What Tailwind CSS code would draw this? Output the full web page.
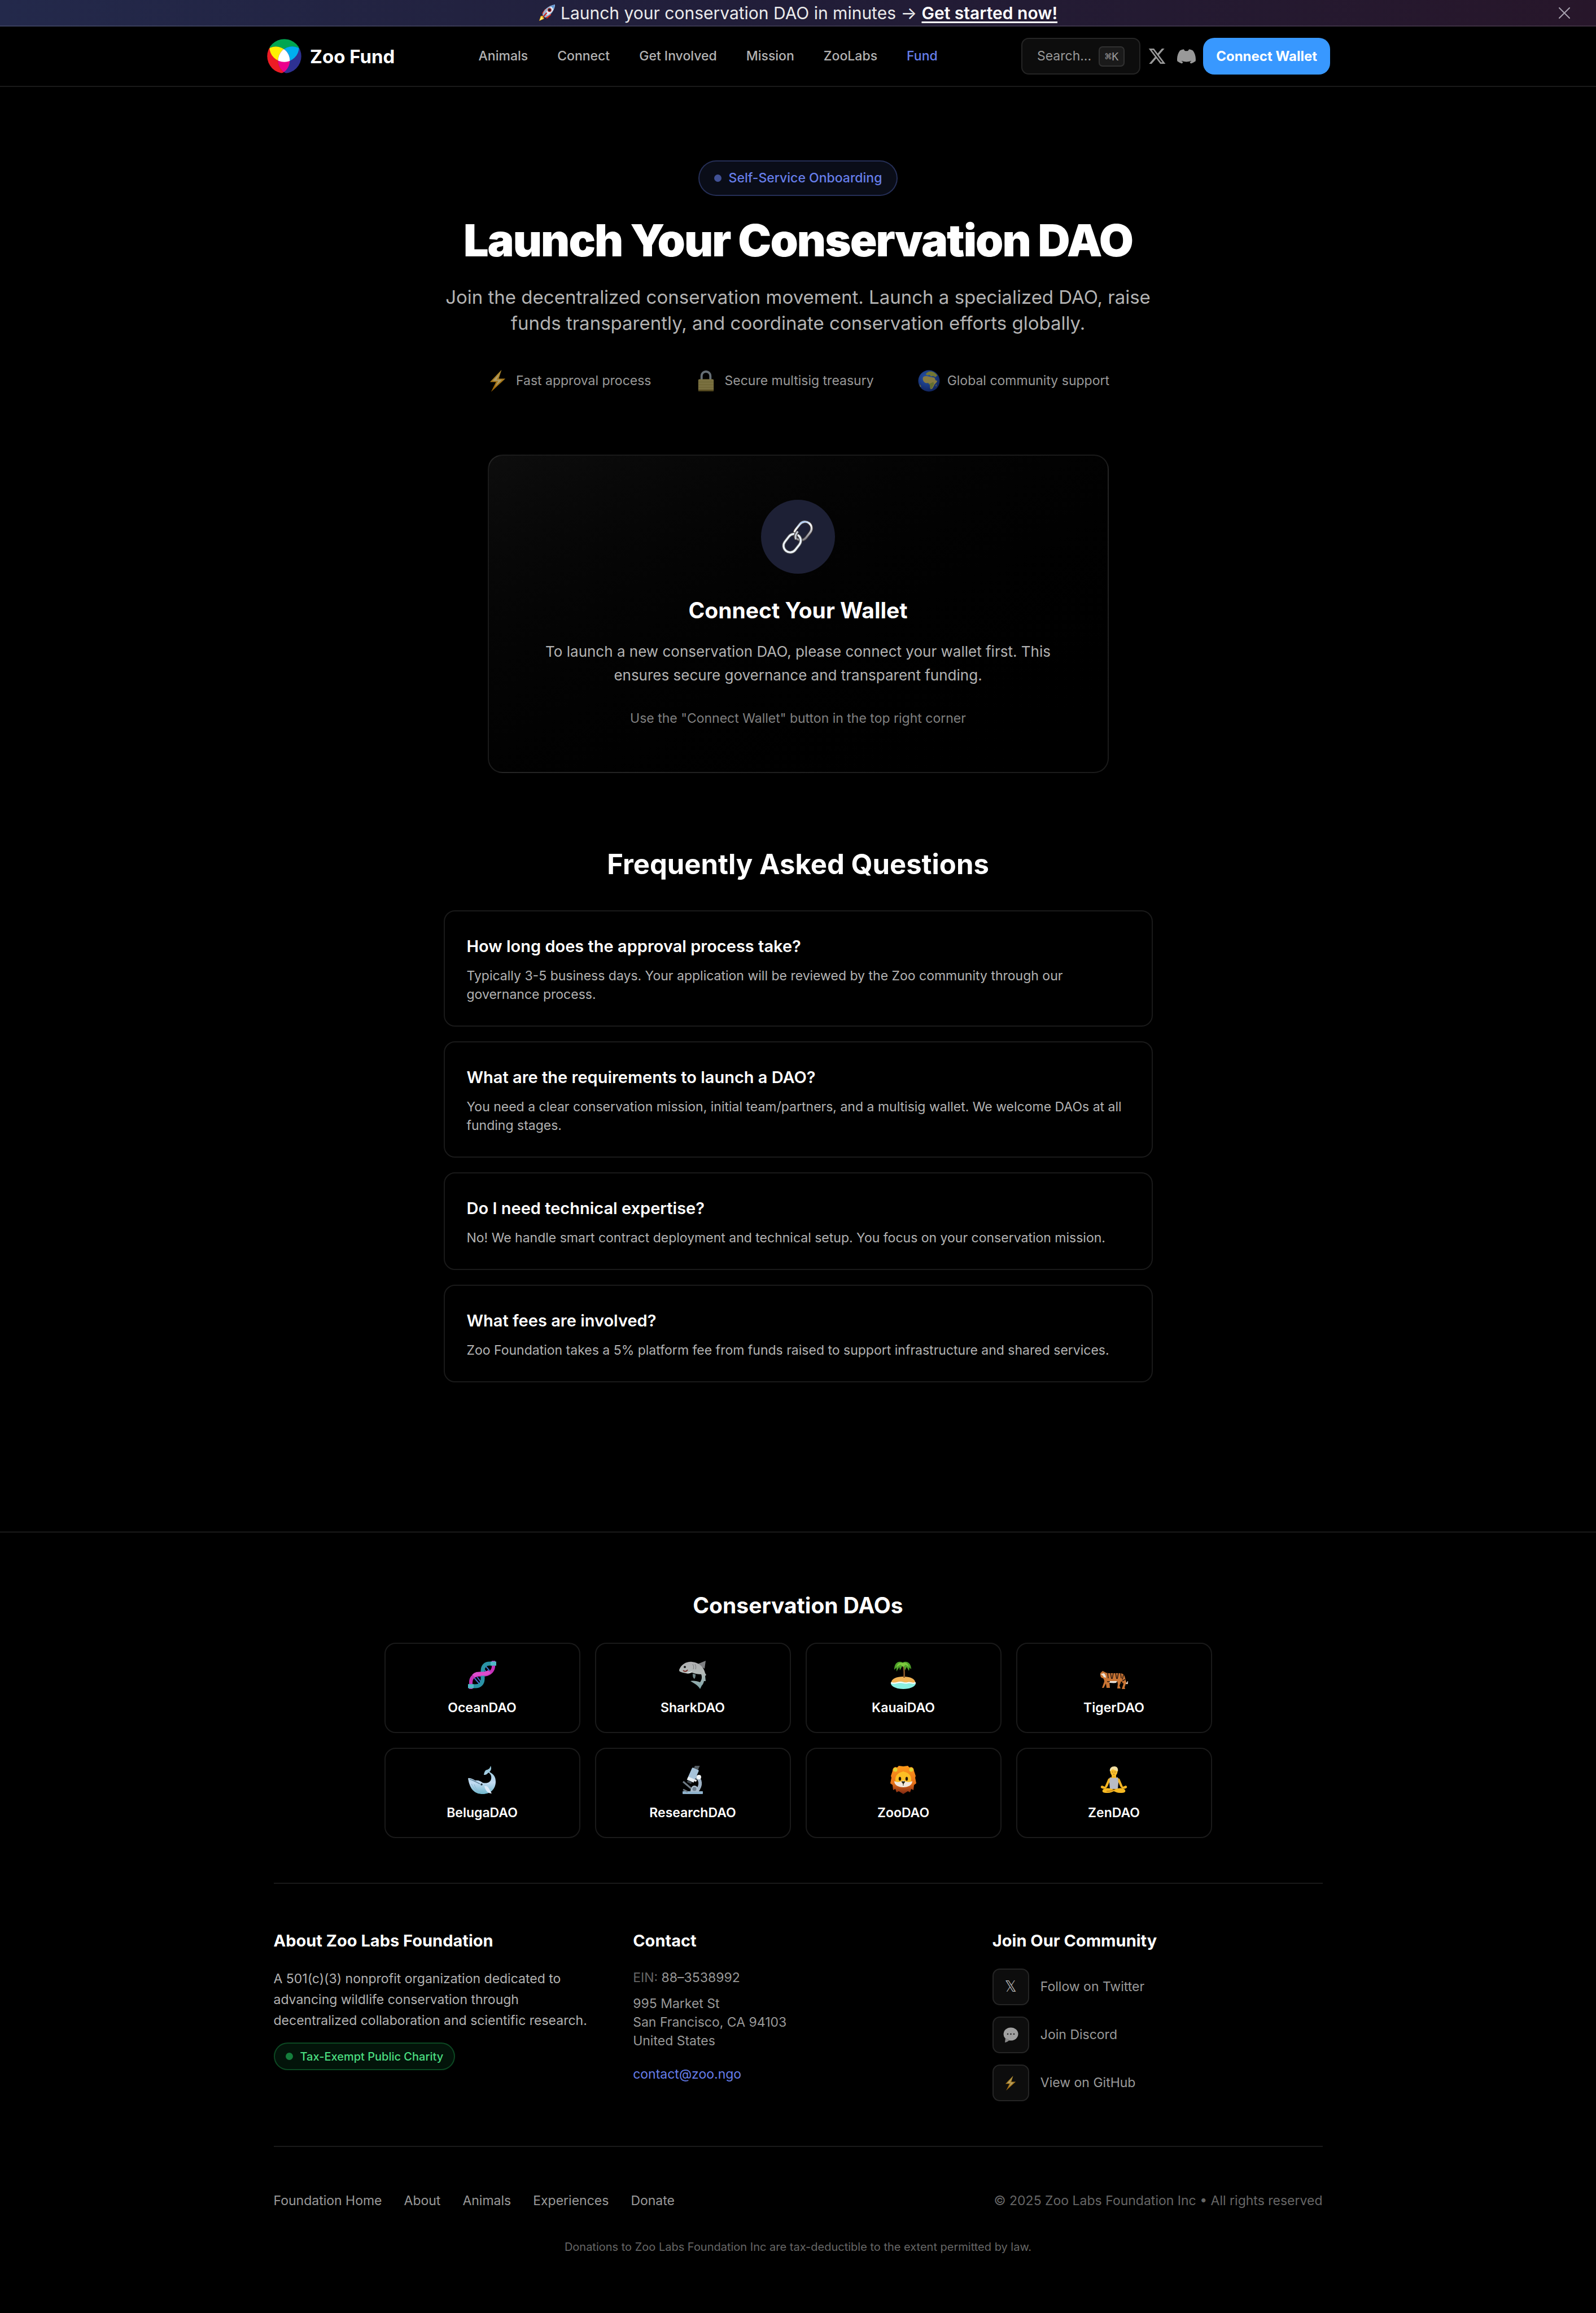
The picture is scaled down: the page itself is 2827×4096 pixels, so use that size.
<!DOCTYPE html>
<html lang="en">
<head>
<meta charset="utf-8">
<meta name="viewport" content="width=device-width, initial-scale=1">
<title>Zoo Fund – Launch Your Conservation DAO</title>
<script src="https://cdn.jsdelivr.net/npm/@tailwindcss/browser@4"></script>
</head>
<body class="bg-black text-white font-['Inter',sans-serif] text-[23px] leading-[33px]">

<svg class="absolute size-0" aria-hidden="true">
  <defs>
    <linearGradient id="gold" x1="0" y1="0" x2="0" y2="1"><stop offset="0" stop-color="#f9c846"/><stop offset="1" stop-color="#e08a00"/></linearGradient>
    <linearGradient id="steel" x1="0" y1="0" x2="1" y2="1"><stop offset="0" stop-color="#8fb6ea"/><stop offset=".35" stop-color="#fff"/><stop offset="1" stop-color="#6a6a72"/></linearGradient>
    <linearGradient id="whale" x1="0" y1="0" x2="0" y2="1"><stop offset="0" stop-color="#8ec3d6"/><stop offset=".6" stop-color="#c3dcf3"/><stop offset="1" stop-color="#6fb6cc"/></linearGradient>
    <linearGradient id="shark" x1="0" y1="0" x2="0" y2="1"><stop offset="0" stop-color="#b0b0b2"/><stop offset=".4" stop-color="#b4bab8"/><stop offset="1" stop-color="#7ba3a6"/></linearGradient>
    <linearGradient id="mane" x1="0" y1="0" x2="0" y2="1"><stop offset="0" stop-color="#ff9a1a"/><stop offset=".6" stop-color="#e8731a"/><stop offset="1" stop-color="#7d2613"/></linearGradient>
    <radialGradient id="sea" cx=".4" cy=".35" r=".7"><stop offset="0" stop-color="#2f6bd8"/><stop offset="1" stop-color="#142a70"/></radialGradient>
    <symbol id="bolt" viewBox="0 0 40 40"><path d="M27 0 6 22h11L8 40l26-24H22z" fill="url(#gold)"/><path d="M24 6 11 20h10l-6 11 13-13H18z" fill="#fff1b8" opacity=".75"/></symbol>
  </defs>
</svg>

<div class="flex items-center justify-between h-[47px] px-[46px] border-b-2 border-white/10 bg-linear-to-r from-[#23294b] via-[#211d38] to-[#27162a]">
  <span class="w-5"></span>
  <p class="flex items-center gap-2 text-[30px] leading-[44px] text-[#ebebeb]">
    <svg class="size-[31px]" viewBox="0 0 32 32" role="img" aria-label="Rocket">
      <path d="M6 17 12 9l3 2-5 9zM15 27l8-7-2-4-8 7z" fill="#d4261c"/>
      <path d="M4 22 1 31l9-4-2-5z" fill="#ffb41f"/><path d="M5 23 2 30l6-3z" fill="#fff17a"/>
      <path d="M7 20C9 11 17 3 30 1 29 13 22 21 12 25z" fill="#9fb4cf"/>
      <path d="M12 19C15 11 21 5 30 1c-1 8-5 14-13 19z" fill="#e3ebf5"/>
      <path d="M22 4l8-3-3 9c-1-3-3-5-5-6z" fill="#5d96d6"/>
      <circle cx="20" cy="11" r="3.6" fill="#c52626"/><circle cx="20" cy="11" r="2.4" fill="#16202e"/>
      <path d="M9 23l6-7" stroke="#c52626" stroke-width="2.4"/>
    </svg>
    <span>Launch your conservation DAO in minutes → <a href="#" class="font-semibold text-white underline decoration-3 underline-offset-4">Get started now!</a></span>
  </p>
  <button type="button" aria-label="Dismiss" class="text-[#a8a3b0]">
    <svg class="size-5" viewBox="0 0 20 20" fill="none" stroke="currentColor" stroke-width="2" stroke-linecap="round"><path d="M1 1l18 18M19 1 1 19"/></svg>
  </button>
</div>

<header class="h-[107px] border-b-2 border-white/10">
  <div class="mx-auto max-w-[1885px] h-full flex items-center justify-between">
    <a href="#" class="flex items-center gap-[15px] pl-[2px]">
      <svg class="size-[61px]" viewBox="25 72 225 226" role="img" aria-label="Zoo logo">
        <defs>
          <clipPath id="cAll"><circle cx="137.500" cy="185" r="112"/></clipPath>
          <clipPath id="cG"><circle cx="137.500" cy="126.400" r="96.600"/></clipPath>
          <clipPath id="cR"><circle cx="82" cy="214" r="92"/></clipPath>
        </defs>
        <g clip-path="url(#cAll)">
          <circle cx="137.500" cy="126.400" r="96.600" fill="#00a651"/>
          <circle cx="82" cy="214" r="92" fill="#ed1c24"/>
          <circle cx="190" cy="214" r="93" fill="#2e3192"/>
          <g clip-path="url(#cG)"><circle cx="82" cy="214" r="92" fill="#fff200"/><circle cx="190" cy="214" r="93" fill="#00aeef"/></g>
          <g clip-path="url(#cR)"><circle cx="190" cy="214" r="93" fill="#ec008c"/><g clip-path="url(#cG)"><circle cx="190" cy="214" r="93" fill="#fff"/></g></g>
        </g>
      </svg>
      <span class="text-[33px] leading-[46px] font-bold">Zoo Fund</span>
    </a>
    <nav class="flex items-center gap-[52px] font-medium text-[#b3b3b3]">
      <a href="#">Animals</a><a href="#">Connect</a><a href="#">Get Involved</a><a href="#">Mission</a><a href="#">ZooLabs</a><a href="#" class="text-[#667eea]">Fund</a>
    </nav>
    <div class="flex items-center gap-[13px]">
      <button type="button" class="flex items-center gap-[13px] h-[65px] px-[26px] rounded-[13px] border-2 border-white/10 bg-[#0d0d0d] text-[#999999]">
        <span>Search...</span>
        <kbd class="flex items-center h-[36px] px-[9px] rounded-[7px] border-2 border-white/10 bg-[#1a1a1a] text-[20px] leading-[26px] font-['DejaVu_Sans_Mono',monospace]">⌘K</kbd>
      </button>
      <div class="flex items-center gap-[19px] text-[#999999]">
        <a href="#" aria-label="X"><svg class="size-[33px]" viewBox="0 0 24 24" fill="currentColor"><path d="M18.244 2.250h3.308l-7.227 8.260 8.502 11.240H16.170l-5.214-6.817L4.990 21.750H1.680l7.730-8.835L1.254 2.250H8.080l4.713 6.231zm-1.161 17.520h1.833L7.084 4.126H5.117z"/></svg></a>
        <a href="#" aria-label="Discord"><svg class="w-[33px] h-[26px]" viewBox="0 0 40 31" fill="currentColor"><path d="M33.866 2.687A33 33 0 0 0 25.668.132a.2.200 0 0 0-.214.100c-1.100 2-2.300 3.400-3.200 3.400h-4.600c-.900 0-2-1.400-3.100-3.400a.200.200 0 0 0-.214-.100A33 33 0 0 0 6.110 2.690C1.600 8.700-.900 16.800.300 25.500c3.100 2.300 6.300 4 10.300 5.200.9-1.100 1.500-2.200 2.100-3.500-1.200-.5-2.200-1-3.200-1.700l.8-.6c6 2.800 13.500 2.800 19.400 0l.8.600c-1 .700-2 1.200-3.200 1.700.6 1.300 1.200 2.400 2.100 3.500 4-1.200 7.200-2.900 10.300-5.200 1.100-8.900-1.300-16.800-5.834-22.813z"/></svg></a>
      </div>
      <button type="button" class="h-[65px] px-[23px] rounded-[20px] bg-[#3898ff] text-[24px] leading-[33px] font-bold">Connect Wallet</button>
    </div>
  </div>
</header>

<main class="flex flex-col items-center pt-[130px] pb-[264px]">
  <span class="flex items-center gap-[13px] h-[63px] px-[26px] rounded-full border-2 border-[#667eea]/30 bg-[#667eea]/10 font-medium text-[#667eea]"><span class="size-[13px] rounded-full bg-[#667eea]/60"></span>Self-Service Onboarding</span>
  <h1 class="mt-[39px] text-[79px] leading-[79px] font-black tracking-tight">Launch Your Conservation DAO</h1>
  <p class="mt-[38px] max-w-[1256px] text-center text-[33px] leading-[46px] text-[#b3b3b3]">Join the decentralized conservation movement. Launch a specialized DAO, raise funds transparently, and coordinate conservation efforts globally.</p>

  <ul class="mt-[60px] flex items-center gap-[78px] text-[#999999]">
    <li class="flex items-center gap-[13px]"><svg class="size-[39px] opacity-70"><use href="#bolt"/></svg>Fast approval process</li>
    <li class="flex items-center gap-[13px]">
      <svg class="size-[39px] opacity-60" viewBox="0 0 40 40"><path d="M12 19v-8a8 8 0 0 1 16 0v8" fill="none" stroke="#a9b7c4" stroke-width="4"/><rect x="6" y="17" width="28" height="22" rx="2" fill="#cbbb6c"/><path d="M6 22h28M6 27h28M6 32h28" stroke="#b3a353" stroke-width="1"/><rect x="6" y="36" width="28" height="3" rx="1" fill="#8c7a35"/></svg>Secure multisig treasury</li>
    <li class="flex items-center gap-[13px]">
      <svg class="size-[39px] opacity-80" viewBox="0 0 40 40"><circle cx="20" cy="20" r="19.500" fill="url(#sea)"/><path d="M9 14c2-3 6-3 10-2l5 1 6 1 2 5 3 1c-1 4-5 5-6 9l-3 5-3 1c-2-3 0-6-2-9-1-3-3-2-6-2-4-1-7-5-6-10z" fill="#a89a52"/><path d="M14 8c2-4 7-6 11-5 5 1 8 4 10 7l-3 3-5-2-3 1-3-3-4 1z" fill="#8f9440"/><path d="M17 23l4 2 7-3 1 4-3 6-3 3c-1-3 0-6-2-8z" fill="#7c8a3c"/><path d="M32 28l2-2-1 5zM3 26l3 4-2 1z" fill="#97934a"/></svg>Global community support</li>
  </ul>

  <section class="mt-[111px] w-full max-w-[1100px] flex flex-col items-center rounded-[26px] border-2 border-white/10 bg-linear-to-br from-[#0d0d0d] to-black px-[78px] py-[78px] text-center">
    <div class="flex items-center justify-center size-[131px] rounded-full bg-[#1d2035]">
      <svg class="size-[60px]" viewBox="0 0 72 72" fill="none" role="img" aria-label="Link">
        <rect x="32" y="2" width="28" height="42" rx="14" transform="rotate(38 46 23)" stroke="#3b3436" stroke-width="7"/>
        <rect x="32" y="2" width="28" height="42" rx="14" transform="rotate(38 46 23)" stroke="url(#steel)" stroke-width="4"/>
        <rect x="9" y="28" width="28" height="42" rx="14" transform="rotate(38 23 49)" stroke="#4a4a4c" stroke-width="7"/>
        <rect x="9" y="28" width="28" height="42" rx="14" transform="rotate(38 23 49)" stroke="#edf3fb" stroke-width="4"/>
        <path d="M31 41c-2-5-1-11 4-17" stroke="#3b3436" stroke-width="7"/><path d="M31 41c-2-5-1-11 4-17" stroke="#c4cad3" stroke-width="4"/>
      </svg>
    </div>
    <h2 class="mt-[39px] text-[39px] leading-[52px] font-bold">Connect Your Wallet</h2>
    <p class="mt-[26px] text-[26px] leading-[42px] text-[#b3b3b3]">To launch a new conservation DAO, please connect your wallet first. This ensures secure governance and transparent funding.</p>
    <p class="mt-[39px] text-[#808080]">Use the "Connect Wallet" button in the top right corner</p>
  </section>

  <section class="mt-[132px] w-full max-w-[1256px]">
    <h2 class="text-center text-[49px] leading-[59px] font-bold">Frequently Asked Questions</h2>
    <div class="mt-[52px] flex flex-col gap-[26px]">
      <article class="rounded-[20px] border-2 border-[#1a1a1a] px-[39px] pt-[39px] pb-[38px]">
        <h3 class="text-[29px] leading-[46px] font-semibold">How long does the approval process take?</h3>
        <p class="mt-[13px] text-[#b3b3b3]">Typically 3-5 business days. Your application will be reviewed by the Zoo community through our governance process.</p>
      </article>
      <article class="rounded-[20px] border-2 border-[#1a1a1a] px-[39px] pt-[39px] pb-[38px]">
        <h3 class="text-[29px] leading-[46px] font-semibold">What are the requirements to launch a DAO?</h3>
        <p class="mt-[13px] text-[#b3b3b3]">You need a clear conservation mission, initial team/partners, and a multisig wallet. We welcome DAOs at all funding stages.</p>
      </article>
      <article class="rounded-[20px] border-2 border-[#1a1a1a] px-[39px] pt-[39px] pb-[38px]">
        <h3 class="text-[29px] leading-[46px] font-semibold">Do I need technical expertise?</h3>
        <p class="mt-[13px] text-[#b3b3b3]">No! We handle smart contract deployment and technical setup. You focus on your conservation mission.</p>
      </article>
      <article class="rounded-[20px] border-2 border-[#1a1a1a] px-[39px] pt-[39px] pb-[38px]">
        <h3 class="text-[29px] leading-[46px] font-semibold">What fees are involved?</h3>
        <p class="mt-[13px] text-[#b3b3b3]">Zoo Foundation takes a 5% platform fee from funds raised to support infrastructure and shared services.</p>
      </article>
    </div>
  </section>
</main>

<footer class="border-t-2 border-[#1a1a1a] pt-[103px] pb-[104px]">
  <h2 class="text-center text-[39px] leading-[52px] font-bold">Conservation DAOs</h2>
  <div class="mx-auto mt-[40px] max-w-[1466px] grid grid-cols-4 gap-[26px] text-center font-semibold">
    <a href="#" class="flex flex-col items-center gap-[13px] rounded-[20px] border-2 border-[#1a1a1a] py-[26px]">
      <span class="flex items-center h-[58px]"><svg class="size-[50px]" viewBox="0 0 50 50" fill="none">
        <path d="M27 13l8 10M31 9l9 11M10 29l12 14M15 27l8 11" stroke="#3f6fd0" stroke-width="2"/>
        <path d="M5 50V38c0-8 5-12 12-13h10c10 0 17-6 18-14V0" stroke="#c431b8" stroke-width="6"/>
        <path d="M0 45h13c8 0 13-5 13-13V18C26 9 31 5 38 5h12" stroke="#2a93a6" stroke-width="7"/>
        <path d="M10 27c4-5 9-4 16-4 5 0 9-1 12-4" stroke="#dd4ccc" stroke-width="7"/>
        <path d="M0 45h10M40 5h10" stroke="#4fb9c6" stroke-width="7"/></svg></span>
      <span>OceanDAO</span></a>
    <a href="#" class="flex flex-col items-center gap-[13px] rounded-[20px] border-2 border-[#1a1a1a] py-[26px]">
      <span class="flex items-center h-[58px]"><svg class="size-[50px]" viewBox="0 0 50 50">
        <path d="M33 6 48 0l-2 14z" fill="#7f8083"/>
        <path d="M1 16C5 6 14 1 24 2c13 1 21 10 23 20l2 3-2 2 1 9h-3c-1 4-2 6-4 8l-3 6c-2-4-6-8-17-14 6-1 12 0 17 2 3-4 4-9 2-14-6 0-11-1-16-3-8 2-16 1-22-2-1-1-1-2-1-3z" fill="url(#shark)"/>
        <path d="M25 23c0 4 0 7 3 9 2-2 2-6 2-8z" fill="#6f8587"/><path d="M4 19c6 3 14 3 20-1-3 5-6 5-11 4z" fill="#dfe7e6"/>
        <path d="M8 17c3 3 6 2 8-1" stroke="#7a2f2a" stroke-width="2" fill="none"/><circle cx="11" cy="11" r="2" fill="#161616"/><path d="M25 6c2 3 2 6 1 9M29 6c2 3 2 6 1 9" stroke="#77797b" fill="none"/></svg></span>
      <span>SharkDAO</span></a>
    <a href="#" class="flex flex-col items-center gap-[13px] rounded-[20px] border-2 border-[#1a1a1a] py-[26px]">
      <span class="flex items-center h-[58px]"><svg class="size-[50px]" viewBox="0 0 50 50">
        <ellipse cx="25" cy="40" rx="22" ry="10" fill="#8af0e2"/><path d="M4 38c0-6 9-10 21-10s21 4 21 10c-5 3-8-2-13 0-6 2-9-2-14-1-6 1-9 3-15 1z" fill="#f2b457"/><path d="M3 39c6 2 10 0 16-1 5 0 8 3 14 1 5-1 8 2 14 0" stroke="#fff" stroke-width="2" fill="none"/>
        <path d="M25 30c1-8 0-15-1-22h3c1 8 1 14 1 22z" fill="#8a5a2b"/>
        <path d="M24 3C15-1 9 5 9 16l4-4v7l5-8 1 6 6-11 3 11 3-6 4 7 1-6 3 3C39 6 33-1 24 3z" fill="#4fa32a"/><path d="M24 4c-6-2-9 1-11 7l7-4 5 4 4-4 6 4c-2-6-5-9-11-7z" fill="#7ecb3e"/></svg></span>
      <span>KauaiDAO</span></a>
    <a href="#" class="flex flex-col items-center gap-[13px] rounded-[20px] border-2 border-[#1a1a1a] py-[26px]">
      <span class="flex items-center h-[58px]"><svg class="size-[50px]" viewBox="0 0 50 50">
        <path d="M1 22l4-4 4 2c3 2 6 2 10 2h16c6 0 9 3 10 9l2 7 3 1c0 3-2 3-4 2l-2 6 1 3h-6l3-9-4-5-3 8 2 5h-6l1-8-1-5H17l1 12h-6l-1-8-4 8H4l4-11c0-3-1-5-2-6-4 0-5-4-5-7z" fill="#c97433"/>
        <path d="M1 24c2 0 4 1 6 5l4 1c0-4-2-7-4-8zM17 36h14l-2 3c-4 1-8 0-12 0z" fill="#ece4da"/>
        <path d="M14 22l1 9M19 22l2 10M24 22l-2 10M28 22l2 10M33 22l-2 10M37 22l1 9M42 25l-2 8M13 37h5M37 40h5M45 33l-5 3" stroke="#2b1a12" stroke-width="1.500"/><path d="M47 39c1 2 3 1 3-3" stroke="#ddd" stroke-width="2" fill="none"/></svg></span>
      <span>TigerDAO</span></a>
    <a href="#" class="flex flex-col items-center gap-[13px] rounded-[20px] border-2 border-[#1a1a1a] py-[26px]">
      <span class="flex items-center h-[58px]"><svg class="size-[50px]" viewBox="0 0 50 50">
        <path d="M40 0c2 4 1 8-2 11 8 4 11 9 11 17 0 13-9 22-23 22C12 50 3 42 0 22c5-1 9 2 13 4 5-1 9 1 13 4 8 2 14-1 15-7 1-5-1-9-5-11-3 4-5 4-8 4 1-6 3-9 6-9 3-1 5-3 6-7z" fill="url(#whale)"/>
        <path d="M29 36c3-1 6 0 8 4l5 9c-6 0-11-4-13-13z" fill="#dbe9f8"/><path d="M3 24c6 1 12 5 18 8" stroke="#5f8299" stroke-width="1.500" fill="none"/><path d="M6 32c3 6 6 10 10 13M11 33c2 6 5 10 9 13" stroke="#8fb4cf" fill="none"/><circle cx="24" cy="33" r="1.800" fill="#20303a"/></svg></span>
      <span>BelugaDAO</span></a>
    <a href="#" class="flex flex-col items-center gap-[13px] rounded-[20px] border-2 border-[#1a1a1a] py-[26px]">
      <span class="flex items-center h-[58px]"><svg class="size-[50px]" viewBox="0 0 50 50">
        <path d="M30 19c10 4 11 16 2 26" stroke="#9fb3c6" stroke-width="6" fill="none"/><rect x="7" y="45" width="36" height="5" rx="1" fill="#8fb3cd"/><path d="M21 46c0-7 3-11 7-11s8 4 8 11z" fill="#a9bccd"/><circle cx="28" cy="41" r="3.500" fill="#6e7f8f"/>
        <path d="M8 28l14 12M8 42l8 4" stroke="#6f7c86" stroke-width="3"/>
        <g transform="rotate(24 25 16)"><rect x="19" y="4" width="13" height="20" rx="2" fill="#a7c3da"/><rect x="19" y="22" width="13" height="6" fill="#e6edf3"/><rect x="21" y="28" width="8" height="4" fill="#3c454c"/><rect x="22" y="-4" width="8" height="8" fill="#555d63"/></g>
        <circle cx="36" cy="20" r="4" fill="#f3f6f8"/><circle cx="30" cy="26" r="2" fill="#fff"/></svg></span>
      <span>ResearchDAO</span></a>
    <a href="#" class="flex flex-col items-center gap-[13px] rounded-[20px] border-2 border-[#1a1a1a] py-[26px]">
      <span class="flex items-center h-[58px]"><svg class="size-[50px]" viewBox="0 0 50 50">
        <path d="M25 1 33 0l3 3c4-2 8 1 8 6l3 9-1 3 2 10-4 3-1 9-4-2-2 6-4-2-8 5-8-5-4 2-2-6-4 2-1-9-4-3 2-10-1-3 3-9c0-5 4-8 8-6l3-3z" fill="url(#mane)"/>
        <circle cx="11" cy="7" r="3.500" fill="#e0d234"/><circle cx="39" cy="7" r="3.500" fill="#e0d234"/>
        <path d="M25 10c9 2 15 7 14 16 0 6-6 11-14 11S11 32 11 26c-1-9 5-14 14-16z" fill="#fdbe24"/>
        <path d="M9 27c5 3 11 2 16-1 5 3 11 4 16 1 0 7-7 11-16 11S9 34 9 27z" fill="#f1e8dc"/>
        <ellipse cx="19" cy="23" rx="2.200" ry="3.500" fill="#241409"/><ellipse cx="31" cy="23" rx="2.200" ry="3.500" fill="#241409"/><path d="M22 28h6l-3 4zM25 32v3" fill="#221" stroke="#221"/></svg></span>
      <span>ZooDAO</span></a>
    <a href="#" class="flex flex-col items-center gap-[13px] rounded-[20px] border-2 border-[#1a1a1a] py-[26px]">
      <span class="flex items-center h-[58px]"><svg class="size-[50px]" viewBox="0 0 50 50">
        <path d="M21 15h8v5l6 3 6 14 5-2c3 1 3 4 0 5-4 2-8 0-10-4l-3-7H17l-3 7c-2 4-6 6-10 4-3-1-3-4 0-5l5 2 6-14 6-3z" fill="#f3b421"/>
        <path d="M18 20c2 2 12 2 14 0l1 10-1 11H18l-1-11z" fill="#b9bcc4"/>
        <path d="M5 43c3-4 9-5 20-1 11-4 17-3 20 1 2 5-5 5-9 5-5 0-8-2-11-3-3 1-6 3-11 3-4 0-11 0-9-5z" fill="#f6b922"/><path d="M12 45c7 0 11-1 15-3" stroke="#c98512" stroke-width="1.500" fill="none"/>
        <ellipse cx="25" cy="10" rx="6.500" ry="8" fill="#fbc02d"/><path d="M18 10c-1-6 3-9 8-9s7 4 6 9c-3-1-6-3-9-4z" fill="#f2dfa0"/><path d="M22 11h2M26 11h2M24 15h2" stroke="#8a5a10"/></svg></span>
      <span>ZenDAO</span></a>
  </div>

  <div class="mx-auto mt-[79px] max-w-[1858px]">
    <div class="grid grid-cols-3 gap-[52px] border-t-2 border-[#1a1a1a] pt-[78px] pb-[79px]">
      <section>
        <h3 class="text-[29px] leading-[46px] font-bold">About Zoo Labs Foundation</h3>
        <p class="mt-[26px] leading-[37px] text-[#b3b3b3]">A 501(c)(3) nonprofit organization dedicated to advancing wildlife conservation through decentralized collaboration and scientific research.</p>
        <span class="mt-[20px] inline-flex items-center gap-[13px] h-[49px] px-[19px] rounded-full border-2 border-[#22c55e]/30 bg-[#22c55e]/10 text-[20px] leading-[26px] font-medium text-[#4ade80]"><span class="size-[13px] rounded-full bg-[#22c55e]/60"></span>Tax-Exempt Public Charity</span>
      </section>
      <section class="text-[#999999]">
        <h3 class="text-[29px] leading-[46px] font-bold text-white">Contact</h3>
        <p class="mt-[26px]"><span class="text-[#666666]">EIN:</span> 88–3538992</p>
        <address class="mt-[13px] not-italic">995 Market St<br>San Francisco, CA 94103<br>United States</address>
        <p class="mt-[26px]"><a href="#" class="text-[#667eea]">contact@zoo.ngo</a></p>
      </section>
      <section>
        <h3 class="text-[29px] leading-[46px] font-bold">Join Our Community</h3>
        <ul class="mt-[26px] flex flex-col gap-[20px] text-[#999999]">
          <li><a href="#" class="flex items-center gap-[20px]"><span class="flex items-center justify-center size-[65px] rounded-[13px] border-2 border-white/10 bg-[#0d0d0d] font-['DejaVu_Sans',sans-serif] text-[26px] text-[#b3b3b3]">𝕏</span>Follow on Twitter</a></li>
          <li><a href="#" class="flex items-center gap-[20px]"><span class="flex items-center justify-center size-[65px] rounded-[13px] border-2 border-white/10 bg-[#0d0d0d]"><svg class="size-[27px]" viewBox="0 0 27 27"><ellipse cx="13.500" cy="12" rx="13" ry="11.500" fill="#a0a0a0"/><path d="M4 19l-1 8c4-1 6-2 8-5z" fill="#8a8a8a"/><circle cx="8" cy="12" r="1.300" fill="#222"/><circle cx="13.500" cy="12" r="1.300" fill="#222"/><circle cx="19" cy="12" r="1.300" fill="#222"/></svg></span>Join Discord</a></li>
          <li><a href="#" class="flex items-center gap-[20px]"><span class="flex items-center justify-center size-[65px] rounded-[13px] border-2 border-white/10 bg-[#0d0d0d]"><svg class="size-[26px] opacity-70"><use href="#bolt"/></svg></span>View on GitHub</a></li>
        </ul>
      </section>
    </div>
    <div class="flex items-center justify-between border-t-2 border-[#1a1a1a] pt-[79px]">
      <nav class="flex items-center gap-[39px] text-[#999999]"><a href="#">Foundation Home</a><a href="#">About</a><a href="#">Animals</a><a href="#">Experiences</a><a href="#">Donate</a></nav>
      <p class="text-[#666666]">© 2025 Zoo Labs Foundation Inc • All rights reserved</p>
    </div>
    <p class="mt-[52px] text-center text-[20px] leading-[26px] text-[#666666]">Donations to Zoo Labs Foundation Inc are tax-deductible to the extent permitted by law.</p>
  </div>
</footer>
</body>
</html>
